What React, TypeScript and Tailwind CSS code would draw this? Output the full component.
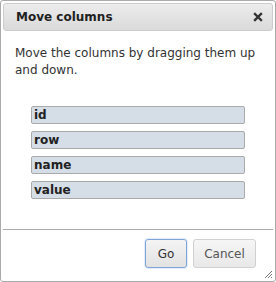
import React from "react";

export default function App() {
  const items = ["id", "row", "name", "value"];
  return (
    <div className="w-[276px] h-[282px] bg-white" style={{ fontFamily: '"DejaVu Sans", sans-serif' }}>
      <div className="relative w-[276px] h-[282px] border border-[#aaaaaa] rounded-[3px] bg-white p-[2px] flex flex-col">
        <div className="h-[28px] flex items-center justify-between border border-[#cccccc] rounded-[3px] bg-gradient-to-b from-[#ececec] to-[#dadada] pl-[12px] pr-[9px]">
          <span className="text-[12px] font-bold text-[#222222]">Move columns</span>
          <svg width="10" height="10" viewBox="0 0 10 10">
            <path d="M2 2 L8 8 M8 2 L2 8" stroke="#333" strokeWidth="2.4" strokeLinecap="square" />
          </svg>
        </div>
        <div className="flex-1 flex flex-col px-[12px]">
          <p className="mt-[14px] text-[12px] leading-[17px] text-[#333333]">
            Move the columns by dragging them up and down.
          </p>
          <div className="mt-[27px] flex flex-col gap-[7px] pl-[16px] pr-[16px]">
            {items.map((it) => (
              <div
                key={it}
                className="h-[18px] border border-[#aaaaaa] rounded-[2px] bg-[#d5dde6] text-[12px] font-bold text-[#222222] leading-[16px] pl-[2px]"
              >
                {it}
              </div>
            ))}
          </div>
        </div>
        <div className="border-t border-[#aaaaaa] h-[50px] flex items-start justify-end gap-[6px] pt-[9px] pr-[17px]">
          <button className="h-[29px] w-[42px] border border-[#7ea3d6] rounded-[3px] bg-gradient-to-b from-[#f4f4f4] to-[#e2e2e2] text-[12px] text-[#333333] shadow-[0_0_2px_#9bbcea]">
            Go
          </button>
          <button className="h-[29px] w-[63px] border border-[#d0d0d0] rounded-[3px] bg-gradient-to-b from-[#f6f6f6] to-[#e8e8e8] text-[12px] text-[#555555]">
            Cancel
          </button>
        </div>
        <svg className="absolute right-[2px] bottom-[2px]" width="10" height="10" viewBox="0 0 10 10">
          <path d="M9 2 L2 9 M9 5 L5 9 M9 8 L8 9" stroke="#777" strokeWidth="1" />
        </svg>
      </div>
    </div>
  );
}
